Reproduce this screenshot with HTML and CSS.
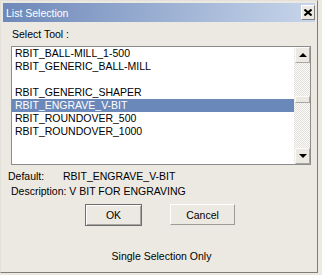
FILE: index.html
```html
<!DOCTYPE html>
<html lang="en">
<head>
    <meta charset="UTF-8">
    <meta name="viewport" content="width=device-width, initial-scale=1.0">
    <title>List Selection</title>
    <link rel="stylesheet" href="styles.css">
</head>
<body>

    <div class="window">
        <div class="titlebar">
            <span class="title">List Selection</span>
            <button class="close">
                <svg width="8" height="7" viewBox="0 0 8 7">
                    <path d="M0.5 0.5 L7.5 6.5 M7.5 0.5 L0.5 6.5" stroke="#000" stroke-width="2" fill="none"/>
                </svg>
            </button>
        </div>

        <div class="content">
            <div class="label">Select Tool :</div>

            <div class="listbox">
                <ul class="items">
                    <li>RBIT_BALL-MILL_1-500</li>
                    <li>RBIT_GENERIC_BALL-MILL</li>
                    <li>&nbsp;</li>
                    <li>RBIT_GENERIC_SHAPER</li>
                    <li class="selected">RBIT_ENGRAVE_V-BIT</li>
                    <li>RBIT_ROUNDOVER_500</li>
                    <li>RBIT_ROUNDOVER_1000</li>
                </ul>
                <div class="scrollbar">
                    <div class="sb-btn"><span class="arrow-up"></span></div>
                    <div class="track"><div class="thumb"></div></div>
                    <div class="sb-btn"><span class="arrow-down"></span></div>
                </div>
            </div>

            <div class="info default"><span class="key">Default:</span><span>RBIT_ENGRAVE_V-BIT</span></div>
            <div class="info desc">Description: V BIT FOR ENGRAVING</div>

            <div class="buttons">
                <button class="btn ok">OK</button>
                <button class="btn cancel">Cancel</button>
            </div>

            <div class="status">Single Selection Only</div>
        </div>
    </div>

</body>
</html>
```

FILE: styles.css
```css
:root {
    --face: #ece9e2;
    --hilite: #6b88ba;
    --shadow: #9d9b96;
    --frame-dark: #7f7d78;
}

body {
    margin: 0;
    background: var(--face);
    font-family: "Liberation Sans", Arial, sans-serif;
    font-size: 10.5px;
    color: #000;
}

.window {
    width: 318px;
    height: 273px;
    box-sizing: border-box;
    border: 1px solid;
    border-color: #e4e1db var(--frame-dark) var(--frame-dark) #e4e1db;
    padding: 2px;
}

.titlebar {
    height: 19px;
    display: flex;
    align-items: center;
    justify-content: space-between;
    padding-left: 3px;
    background: linear-gradient(to right, #6d88b9, #c7d5ea);
}

.title {
    color: #fff;
    line-height: 13px;
    margin-top: 1px;
}

.close {
    width: 14px;
    height: 15px;
    padding: 0;
    margin-right: 0;
    display: flex;
    align-items: center;
    justify-content: center;
    background: var(--face);
    border: 1px solid;
    border-color: #fff #808080 #808080 #fff;
}

.content {
    padding: 0 5px;
}

.label {
    margin-top: 6px;
    padding-left: 4px;
    line-height: 13px;
}

.listbox {
    margin-top: 5px;
    margin-left: 3px;
    width: 300px;
    height: 119px;
    box-sizing: border-box;
    border: 1px solid #8c8c8c;
    background: #fff;
    display: flex;
}

.items {
    flex: 1;
    list-style: none;
    margin: 0;
    padding: 0;
}

.items li {
    height: 13px;
    line-height: 13px;
    padding-left: 3px;
    white-space: nowrap;
}

.items .selected {
    background: var(--hilite);
    color: #fff;
}

.scrollbar {
    width: 16px;
    display: flex;
    flex-direction: column;
    background: repeating-conic-gradient(#e2e0da 0 25%, #fbfaf8 0 50%) 0 0 / 2px 2px;
}

.sb-btn {
    height: 16px;
    box-sizing: border-box;
    margin-left: 1px;
    background: var(--face);
    border: 1px solid;
    border-color: #fbfaf8 #a8a6a0 #a8a6a0 #fbfaf8;
    display: flex;
    align-items: center;
    justify-content: center;
}

.arrow-up {
    width: 0;
    height: 0;
    border-left: 4px solid transparent;
    border-right: 4px solid transparent;
    border-bottom: 4px solid #000;
}

.arrow-down {
    width: 0;
    height: 0;
    border-left: 4px solid transparent;
    border-right: 4px solid transparent;
    border-top: 4px solid #000;
}

.track {
    flex: 1;
}

.thumb {
    margin-top: 33px;
    margin-left: 1px;
    height: 7px;
    box-sizing: border-box;
    background: var(--face);
    border: 1px solid;
    border-color: #fbfaf8 #a8a6a0 #a8a6a0 #fbfaf8;
}

.info {
    line-height: 13px;
    white-space: nowrap;
}

.default {
    margin-top: 5px;
    display: flex;
}

.key {
    width: 55px;
}

.desc {
    margin-top: 2px;
    padding-left: 3px;
}

.buttons {
    margin-top: 6px;
    padding-left: 2px;
    display: flex;
    justify-content: center;
    align-items: flex-start;
    gap: 28px;
}

.btn {
    font: inherit;
    color: #000;
    padding: 0;
    background: var(--face);
    border: 1px solid;
    box-sizing: border-box;
}

.ok {
    width: 57px;
    height: 22px;
    border-color: #6e6e6e;
    box-shadow: inset 1px 1px #fff, inset -1px -1px #a8a6a0;
}

.cancel {
    width: 65px;
    height: 21px;
    border-color: #fff var(--shadow) var(--shadow) #fff;
}

.status {
    margin-top: 24px;
    padding-left: 5px;
    text-align: center;
    line-height: 13px;
}
```
